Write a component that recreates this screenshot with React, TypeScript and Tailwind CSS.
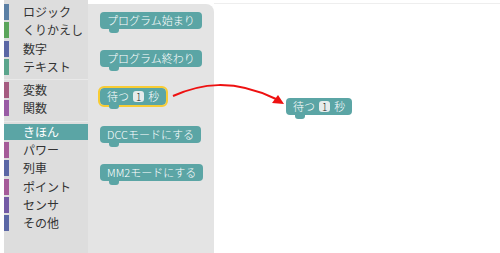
const font = "font-['Noto_Sans_CJK_JP','Noto_Sans',sans-serif] font-light";

const categories = [
  { name: "ロジック", color: "bg-[#5b80a5]" },
  { name: "くりかえし", color: "bg-[#5ba55b]" },
  { name: "数字", color: "bg-[#5b67a5]" },
  { name: "テキスト", color: "bg-[#5ba58c]" },
  { sep: true },
  { name: "変数", color: "bg-[#a55b80]" },
  { name: "関数", color: "bg-[#995ba5]" },
  { sep: true },
  { name: "きほん", color: "bg-[#5ba5a5]", selected: true },
  { name: "パワー", color: "bg-[#a55b99]" },
  { name: "列車", color: "bg-[#5b67a5]" },
  { name: "ポイント", color: "bg-[#a55b99]" },
  { name: "センサ", color: "bg-[#745ba5]" },
  { name: "その他", color: "bg-[#5b67a5]" },
];

function Block({ children, selected }: { children: React.ReactNode; selected?: boolean }) {
  return (
    <div
      className={`relative flex items-center h-[17px] rounded-[4px] bg-[#5ba5a5] px-[7px] text-[11px] leading-none text-white self-start ${
        selected ? "outline-2 outline-[#f8cc34]" : ""
      }`}
    >
      {children}
      {/* next connection tab */}
      <div className="absolute left-[9px] -bottom-[4px] w-[10px] h-[5px] rounded-b-[3px] bg-[#5ba5a5]" />
    </div>
  );
}

function WaitBlock({ selected }: { selected?: boolean }) {
  return (
    <Block selected={selected}>
      <span>待つ</span>
      <span className="mx-[4px] flex items-center justify-center h-[11px] px-[3px] rounded-[3px] bg-[#e6ecec] text-[10px] text-[#222]">
        1
      </span>
      <span>秒</span>
    </Block>
  );
}

export default function App() {
  return (
    <div className={`relative w-[500px] h-[253px] bg-white overflow-hidden flex ${font}`}>
      <div className="w-[4px] shrink-0" />

      {/* Toolbox */}
      <div className="w-[84px] shrink-0 h-full bg-[#dddddd] pt-[4px] flex flex-col font-normal">
        {categories.map((c, i) =>
          c.sep ? (
            <div key={i} className="h-[5px] flex items-center">
              <div className="w-full h-px bg-[#e9e9e9]" />
            </div>
          ) : (
            <div
              key={i}
              className={`flex items-center h-[16px] mb-[2.3px] ${c.selected ? "bg-[#5ba5a5] text-white" : "text-[#333]"}`}
            >
              <div className={`w-[5px] h-full ${c.color}`} />
              <span className="ml-[14px] text-[12px] leading-none">{c.name}</span>
            </div>
          )
        )}
      </div>

      {/* Flyout */}
      <div className="w-[126px] shrink-0 mt-[4px] bg-[#e4e4e4] rounded-tr-[8px] pl-[12px] pt-[8px] flex flex-col gap-[21px]">
        <Block>プログラム始まり</Block>
        <Block>プログラム終わり</Block>
        <WaitBlock selected />
        <Block>DCCモードにする</Block>
        <Block>MM2モードにする</Block>
      </div>

      {/* Workspace */}
      <div className="relative flex-1 mt-[3px] border-t border-[#eeeeee]">
        <div className="absolute left-[72px] top-[94px]">
          <WaitBlock />
        </div>
      </div>

      {/* Annotation arrow */}
      <svg className="absolute inset-0 pointer-events-none" width="500" height="253">
        <path d="M173 96 C 200 84, 232 78, 276 99" fill="none" stroke="#ee1111" strokeWidth="2" />
        <path d="M284 104 L272 103 L278 95 Z" fill="#ee1111" />
      </svg>
    </div>
  );
}
